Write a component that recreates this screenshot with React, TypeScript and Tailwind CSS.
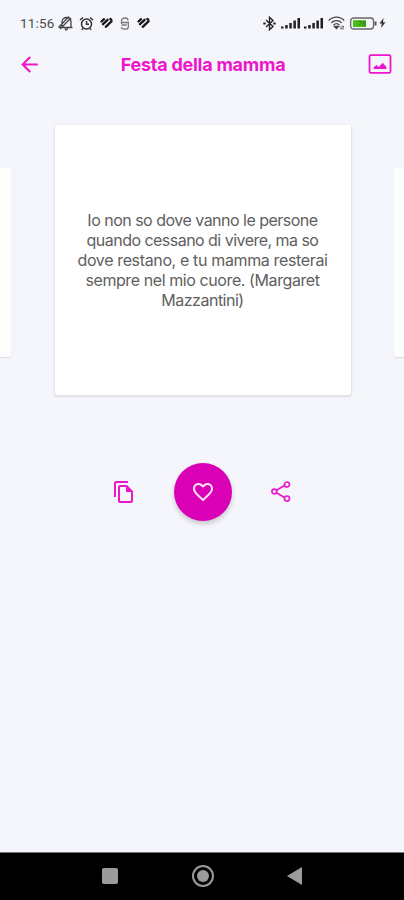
import React from 'react';
import { MdArrowBack, MdFavoriteBorder, MdOutlineFileCopy } from 'react-icons/md';

function PillHeart() {
  return (
    <svg className="h-3 w-[13px]" viewBox="0 0 13 12" fill="none" stroke="#181818" strokeWidth="2.3" strokeLinecap="round">
      <path d="M1.500 4.500 4 2.200M3 7.200 7.600 2.800M5.800 9.800 11.600 4.200M10.300 1.900l1 .7" />
    </svg>
  );
}

function Signal() {
  return (
    <svg className="h-3 w-[19px]" viewBox="0 0 19 12" fill="#202020">
      <path d="M0 9.500h2.500v2H0zM4.200 8h2.500v3.500H4.200zM8.300 6h2.500v5.500H8.300zM12.400 3.500h2.500v8h-2.500zM16.500 1H19v10.500h-2.500z" />
    </svg>
  );
}

function StatusBar() {
  return (
    <div className="flex h-[46px] items-center justify-between pr-[18px] pl-5">
      <div className="flex items-center">
        <span className="w-[37px] font-['Roboto','Liberation_Sans',sans-serif] text-[13.500px] leading-4 tracking-[0.2px] whitespace-nowrap text-[#4c4c4c]">11:56</span>
        <svg className="h-4 w-[18px]" viewBox="0 0 18 16" fill="none" stroke="#444" strokeWidth="1.3">
          <path d="M2.500 12.500h13M5 12V7c0-3 2-4.500 4.500-4.500S14 4 14 7v5.500M8 13.500l1 1.500 2-1.500M1.500 12.500 12 1.500M3 14 14 3" />
        </svg>
        <svg className="ml-[4px] h-[15px] w-[15px]" viewBox="0 0 15 15" fill="none" stroke="#303030" strokeWidth="1.5">
          <circle cx="7.500" cy="8" r="5" />
          <path d="M1 4 4 1.500M14 4l-3-2.500M7.500 5v3.200H10M4 12.500l-1.200 1.300M11 12.500l1.200 1.300" />
        </svg>
        <span className="ml-[6px] flex"><PillHeart /></span>
        <svg className="ml-[7px] h-[13px] w-[10px]" viewBox="0 0 10 13" fill="none" stroke="#777" strokeWidth="1.3">
          <path d="M1.500 5V3.500C1.500 2 3 1 5 1s3 1 3 2.500M1.500 5.500h6.800v4.500c0 1.500-1.500 2.200-3.300 2.200S1.500 11.500 1.500 10M1.500 8h5M1.500 5v2" />
        </svg>
        <span className="ml-[7px] flex"><PillHeart /></span>
      </div>
      <div className="flex items-center">
        <svg className="h-[15px] w-[13px]" viewBox="0 0 13 15" fill="none" stroke="#222" strokeWidth="1.4">
          <path d="M3 4l7 6.500-3.500 3.200V1.300L10 4.500 3 11" />
          <path d="M.3 7.500h2.400M10.300 7.500h2.400" strokeWidth="2" />
        </svg>
        <span className="ml-[5px] flex gap-[4px]"><Signal /><Signal /></span>
        <svg className="ml-[5px] h-[14px] w-[17px]" viewBox="0 0 17 14" fill="none" stroke="#444" strokeWidth="1.3">
          <path d="M.8 4.500C5-.1 12-.1 16.200 4.500M3.300 6.800c3-3 7.500-3 10.400 0M5.500 9c1.800-1.700 4.200-1.700 6 0" />
          <path d="m6.500 10.500 2 2 2-2z" fill="#444" />
          <path d="M12 11h4l-1.500-1.500M16 12.800h-4" strokeWidth=".8" />
        </svg>
        <svg className="ml-[5px] h-[13px] w-[27px]" viewBox="0 0 27 13" fill="none">
          <rect x=".7" y="1" width="22.800" height="11" rx="2.800" stroke="#666" strokeWidth="1.300" />
          <path d="M25.500 4.500v4" stroke="#555" strokeWidth="2" />
          <path d="M3 3.200h13v6.800H3z" fill="#4abc18" />
          <text x="8" y="9.300" fontSize="7" fill="#276b0a" fontFamily="Roboto, sans-serif">78</text>
        </svg>
        <svg className="ml-[2px] h-[12px] w-[7px]" viewBox="0 0 7 12" fill="#333">
          <path d="M4.500 1 .5 6.500h2.300L2 11l4.500-5.800H4z" />
        </svg>
      </div>
    </div>
  );
}

function Header() {
  return (
    <header className="flex h-9 items-center justify-between pr-[12px] pl-[17px] text-[#ed16cc]">
      <MdArrowBack className="h-[25px] w-[25px]" />
      <h1 className="-ml-[4px] pt-px text-[18px] leading-6 font-bold tracking-[-0.25px] whitespace-nowrap">Festa della mamma</h1>
      <svg className="h-5 w-6" viewBox="0 0 24 20">
        <rect x="1.500" y="1.200" width="21" height="17.600" rx="1.200" fill="none" stroke="currentColor" strokeWidth="1.800" />
        <path d="M5.500 15v-1.500l3-2.600 2.300 2 4-4.200 3.700 4.600V15z" fill="currentColor" />
      </svg>
    </header>
  );
}

const lines = [
  { text: 'Io non so dove vanno le persone', tracking: 'tracking-[-0.51px]' },
  { text: 'quando cessano di vivere, ma so', tracking: 'tracking-[-0.53px]' },
  { text: 'dove restano, e tu mamma resterai', tracking: 'tracking-[-0.36px]' },
  { text: 'sempre nel mio cuore. (Margaret', tracking: 'tracking-[-0.41px]' },
  { text: 'Mazzantini)', tracking: 'tracking-[-0.5px]' },
];

function Carousel() {
  return (
    <section className="mt-[43px] flex h-[270px] items-center justify-between">
      <div className="mt-1 h-[189px] w-[11px] rounded-r-[2px] bg-[#fdfefe] shadow-[0_1px_1px_#d9dade]" />
      <article className="flex h-[270px] w-[296px] flex-col items-center justify-center rounded-[2px] bg-white text-[16px] leading-5 text-[#606060] shadow-[0_1px_2px_1px_#dedfe2]">
        {lines.map((line) => (
          <span key={line.text} className={`whitespace-nowrap ${line.tracking}`}>{line.text}</span>
        ))}
      </article>
      <div className="mt-1 h-[189px] w-[10px] rounded-l-[2px] bg-[#fdfefe] shadow-[0_1px_1px_#d9dade]" />
    </section>
  );
}

function Actions() {
  return (
    <div className="mt-[67px] flex h-[59px] items-center justify-center pl-px text-[#ec17cc]">
      <MdOutlineFileCopy className="h-[24px] w-[24px]" />
      <button className="mr-[38px] ml-[38px] flex h-[58px] w-[58px] items-center justify-center rounded-full bg-[#d900b5] text-[#ffe3fb] shadow-[0_3px_5px_#c6c8cf]">
        <MdFavoriteBorder className="h-[24px] w-[24px]" />
      </button>
      <svg className="h-[23px] w-[23px]" viewBox="0 0 23 23" fill="none" stroke="currentColor" strokeWidth="1.700">
        <path d="m6.500 10.300 8-4.700M6.500 12.700l8 4.700" />
        <circle cx="4.300" cy="11.500" r="2.400" />
        <circle cx="17" cy="4.500" r="2.500" />
        <circle cx="17" cy="18.500" r="2.500" />
      </svg>
    </div>
  );
}

function NavBar() {
  return (
    <nav className="mt-auto flex h-12 items-center justify-between border-t border-[#777] bg-black pr-[102px] pb-px pl-[102px]">
      <div className="h-4 w-4 rounded-[2px] bg-[#9b9b9b]" />
      <div className="flex h-[22px] w-[22px] items-center justify-center rounded-full border-2 border-[#9b9b9b]">
        <div className="h-3 w-3 rounded-full bg-[#9b9b9b]" />
      </div>
      <svg className="h-[18px] w-[15px]" viewBox="0 0 15 18" fill="#9b9b9b"><path d="M15 0v18L0 9z" /></svg>
    </nav>
  );
}

export default function App() {
  return (
    <main className="flex h-[900px] w-[404px] flex-col overflow-hidden bg-[#f5f6fb] font-['Inter','Liberation_Sans',sans-serif]">
      <StatusBar />
      <Header />
      <Carousel />
      <Actions />
      <NavBar />
    </main>
  );
}
